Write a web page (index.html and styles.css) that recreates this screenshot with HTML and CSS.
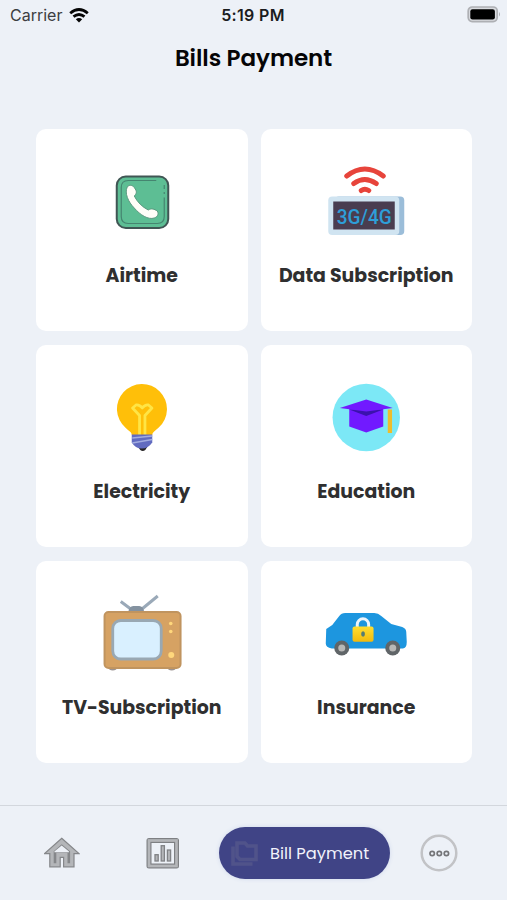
FILE: index.html
```html
<!DOCTYPE html>
<html lang="en">
<head>
<meta charset="utf-8">
<title>Bills Payment</title>
<link rel="stylesheet" href="styles.css">
</head>
<body>
<div class="screen">
  <header class="status">
    <div class="carrier"><span class="carrier-name">Carrier</span>
      <svg width="20" height="15" viewBox="0 0 20 15" fill="none" stroke="#050505" stroke-width="2.8"><path d="M1.2 5.2Q10-2.2 18.8 5.2M4.5 8.7q5.5-4.5 11 0"/><path d="M6.8 11.2q3.2-2.4 6.4 0L10 14.5z" fill="#050505" stroke="none"/></svg>
    </div>
    <div class="clock">5:19 PM</div>
    <svg class="battery" width="34" height="17" viewBox="0 0 34 17"><rect x="1.2" y="1" width="29" height="14.6" rx="4" fill="#d9dbdf" stroke="#aeb0b4" stroke-width="1.7"/><rect x="3.3" y="3.2" width="24.6" height="10.2" rx="2.2"/><path d="M32 6q2 2.2 0 4.6z" fill="#aeb0b4"/></svg>
  </header>
  <h1 class="title">Bills Payment</h1>

  <main class="cards">
    <section class="card">
      <svg class="art" viewBox="91.75 159 100 90">
        <rect x="116.500" y="176.500" width="51.500" height="51.500" rx="9" fill="#5dbe94" stroke="#405654" stroke-width="2"/>
        <path d="M156 180.500H128q-7 0-7 7v29q0 7 7 7h29q7 0 7-7v-19M164 194v-2M164 189v-4" fill="none" stroke="#458570" stroke-width="1.200"/>
        <path d="M127 187c2-3 6-2 8 2 2 3 1 5-1 7 3 6 8 11 14 14 3-2 6-1 9 1 2 3 0 6-3 7-6 2-14-3-20-10-6-6-10-15-7-21z" fill="#fffef8" stroke="#5c9a80"/>
      </svg>
      <h2 class="label">Airtime</h2>
    </section>
    <section class="card">
      <svg class="art" viewBox="316.25 159 100 90">
        <g fill="none" stroke="#e7443b" stroke-width="5" stroke-linecap="round"><path d="M347 176Q365 162 383.500 176M354 183.500q11-8 22.500 0M361.500 190.500q3.500-2.500 7.500 0"/></g>
        <rect x="335" y="196.500" width="69.500" height="38.500" rx="4" fill="#9bbdd9"/>
        <rect x="328.500" y="196.500" width="71" height="38.500" rx="4" fill="#d0e4f1"/>
        <rect x="333.500" y="201.500" width="61.500" height="28" fill="#493d50"/>
        <text class="network" x="337" y="223.500" textLength="55" lengthAdjust="spacingAndGlyphs">3G/4G</text>
      </svg>
      <h2 class="label">Data Subscription</h2>
    </section>
    <section class="card">
      <svg class="art" viewBox="91.75 375 100 90">
        <path d="M131.500 435c0-3-3-4-6-7a25 25 0 1 1 33-.5c-4 4-6 4-6.500 7.500z" fill="#ffbf09"/>
        <path d="M139.300 435v-19.500l-7-7.500 3.500-3q3.500-.5 6.200 3 2.700-3.500 6.200-3l3.500 3-7 7.500V435" fill="none" stroke="#ffe545" stroke-width="2.800" stroke-linejoin="round"/>
        <path d="M138 447h9l-2 3q-2.500 2-5 0z" fill="#262426"/>
        <path d="M131.500 434.500h20.500v8q-4 6-10.500 6t-10-6z" fill="#616bc0"/>
        <path d="M132 438l20-2M132 443l20-3.500" stroke="#a2acdf" stroke-width="1.500"/>
      </svg>
      <h2 class="label">Electricity</h2>
    </section>
    <section class="card">
      <svg class="art" viewBox="316.25 375 100 90">
        <circle cx="366.500" cy="417.500" r="33.700" fill="#7ce8f6"/>
        <path d="M349.500 408h34v18.500l-17 6-17-6z" fill="#711aff"/>
        <path d="M349.500 409.500l17 6.500 17-6.500z" fill="#3b12ad"/>
        <path d="M340 408l26.500-8.500L393 408l-26.500 3.500z" fill="#711aff"/>
        <path d="M388 409.500h4.300v23.500H388z" fill="#eebd2c"/>
      </svg>
      <h2 class="label">Education</h2>
    </section>
    <section class="card">
      <svg class="art" viewBox="91.75 591 100 90">
        <path d="M120.500 601.500l12 9M157.500 596l-17 14" fill="none" stroke="#9aa9b8" stroke-width="3"/>
        <path d="M128 612q1-6 5-6h6q4 0 5 6z" fill="#8492a0"/>
        <path d="M109 667h7v2.500q-3.500 2-7 0zM168 667h7v2.500q-3.500 2-7 0z" fill="#9b9290"/>
        <rect x="104.300" y="612" width="76" height="56" rx="4" fill="#d6a263" stroke="#c0945f" stroke-width="2"/>
        <rect x="112.500" y="620.500" width="48.500" height="38.500" rx="8" fill="#d9f0ff" stroke="#99a8b3" stroke-width="2.800"/>
        <g fill="#ffd77c"><circle cx="170.500" cy="623.500" r="1.800"/><circle cx="170.500" cy="631.500" r="1.800"/><circle cx="171" cy="655" r="3"/></g>
      </svg>
      <h2 class="label">TV-Subscription</h2>
    </section>
    <section class="card">
      <svg class="art" viewBox="316.25 591 100 90">
        <path d="M326.500 629l6-4 7-9q2-3 6-3h29q4 0 7 3l10 8 11 3q4 1.500 4 5l.5 10q0 6-4 6.500h-71q-6-1-6-5z" fill="#1d96df"/>
        <g fill="#606568"><circle cx="342" cy="648" r="7.500"/><circle cx="393" cy="648" r="7.500"/></g><g fill="#b8b8b7"><circle cx="342" cy="648" r="3.500"/><circle cx="393" cy="648" r="3.500"/></g>
        <path d="M357.500 627v-2.500a5.700 5.700 0 0 1 11.400 0v2.500" fill="none" stroke="#ecf5fc" stroke-width="3"/>
        <defs><linearGradient id="lock" x2="0" y2="1"><stop stop-color="#ffdf32"/><stop offset="1" stop-color="#f2b90d"/></linearGradient></defs>
        <rect x="352.800" y="626.500" width="21" height="15.300" rx="2" fill="url(#lock)"/><ellipse cx="363.300" cy="634" rx="1.900" ry="2.700" fill="#557c73"/>
      </svg>
      <h2 class="label">Insurance</h2>
    </section>
  </main>

  <nav class="nav">
    <a class="home"><svg width="36" height="34" viewBox="44 836 36 34" fill="none"><path d="M61.700 838.300L79 853.600h-5V866.800H63.600v-9.500h-3.400v9.500H49.800V853.600H44.600z" fill="#b4b6b9" stroke="#85878a" stroke-width="1.200"/><path d="M61.700 844.200l8.400 7v12h-2.600v-10.500H56.300v10.500h-2.600v-12z" fill="#85878a"/><path d="M61.700 845.600l7.300 6v.6H54.400v-.6z" fill="#edf1f7"/></svg></a>
    <a class="stats"><svg width="34" height="32" viewBox="146 837 34 32"><rect x="149" y="840.500" width="27.500" height="25.500" fill="none" stroke="#7e8083" stroke-width="5" stroke-linejoin="round"/><rect x="149" y="840.500" width="27.500" height="25.500" fill="none" stroke="#b4b6b9" stroke-width="2.700"/><g fill="#b4b6b9" stroke="#808285" stroke-width="1.300"><rect x="155" y="854.700" width="3.200" height="6.300"/><rect x="161.200" y="845.700" width="3.200" height="15.300"/><rect x="167.400" y="850" width="3.200" height="11"/></g></svg></a>
    <a class="pill"><svg width="28" height="28" viewBox="230 839 28 28" fill="none"><path d="M233 846.500v17.500h19.500M237 843h8l2.500 3h8.500v13.500h-16l-3-3z" stroke="#50538a" stroke-width="3.600"/></svg><span class="pill-text">Bill Payment</span></a>
    <a class="more"><svg width="38" height="38" viewBox="0 0 38 38" fill="none"><circle cx="19" cy="19" r="17.300" stroke="#c2c3c6" stroke-width="2.500"/><g stroke="#747578" stroke-width="1.700"><circle cx="12.200" cy="19.500" r="2.200"/><circle cx="19.300" cy="19.500" r="2.200"/><circle cx="26.400" cy="19.500" r="2.200"/></g></svg></a>
  </nav>
</div>
</body>
</html>
```
FILE: styles.css
```css
* { box-sizing: border-box; }
body { margin: 0; background: #edf1f7; font-family: Poppins, Inter, sans-serif; }
svg { display: block; }
.screen { width: 507px; height: 900px; display: flex; flex-direction: column; overflow: hidden; }
.status { height: 30px; display: grid; grid-template-columns: 1fr auto 1fr; align-items: center; padding: 0 6px 0 8px; font-family: Inter, sans-serif; }
.carrier { display: flex; align-items: center; gap: 7px; padding-left: 2px; }
.carrier-name { font-size: 16px; color: #3c3e41; }
.clock { font-size: 16px; font-weight: 600; color: #1b1c1e; letter-spacing: 0.35px; margin-right: 3px; }
.battery { justify-self: end; margin-top: -2px; }
.title { margin: 10px 0 0; height: 36px; line-height: 36px; text-align: center; font-size: 23px; font-weight: 600; letter-spacing: -0.05px; color: #050506; }
.cards { margin: 53px 35px 0 36px; display: grid; grid-template-columns: 1fr 1fr; grid-auto-rows: 202px; gap: 14px 13px; }
.card { background: #fff; border-radius: 10px; padding-top: 30px; display: flex; flex-direction: column; align-items: center; }
.art { width: 100px; height: 90px; flex: none; }
.network { font: 500 20px Roboto, sans-serif; fill: #2e9ed8; }
.label { margin: 11px 0 0; height: 30px; line-height: 31px; font-size: 18.9px; font-weight: 700; color: #2f2f30; white-space: nowrap; }
.nav { margin-top: 42px; height: 95px; border-top: 1px solid #d3d7dd; display: flex; align-items: center; padding-left: 44px; }
.stats { margin-left: 66px; }
.pill { margin-left: 39px; width: 171px; height: 52px; border-radius: 26px; background: #404486; display: flex; align-items: center; padding-left: 11px; gap: 12px; box-shadow: 0 0 4px #cfd8ec; }
.pill-text { font-size: 16.3px; color: #f1f2fb; white-space: nowrap; }
.more { margin-left: 30px; }
```
